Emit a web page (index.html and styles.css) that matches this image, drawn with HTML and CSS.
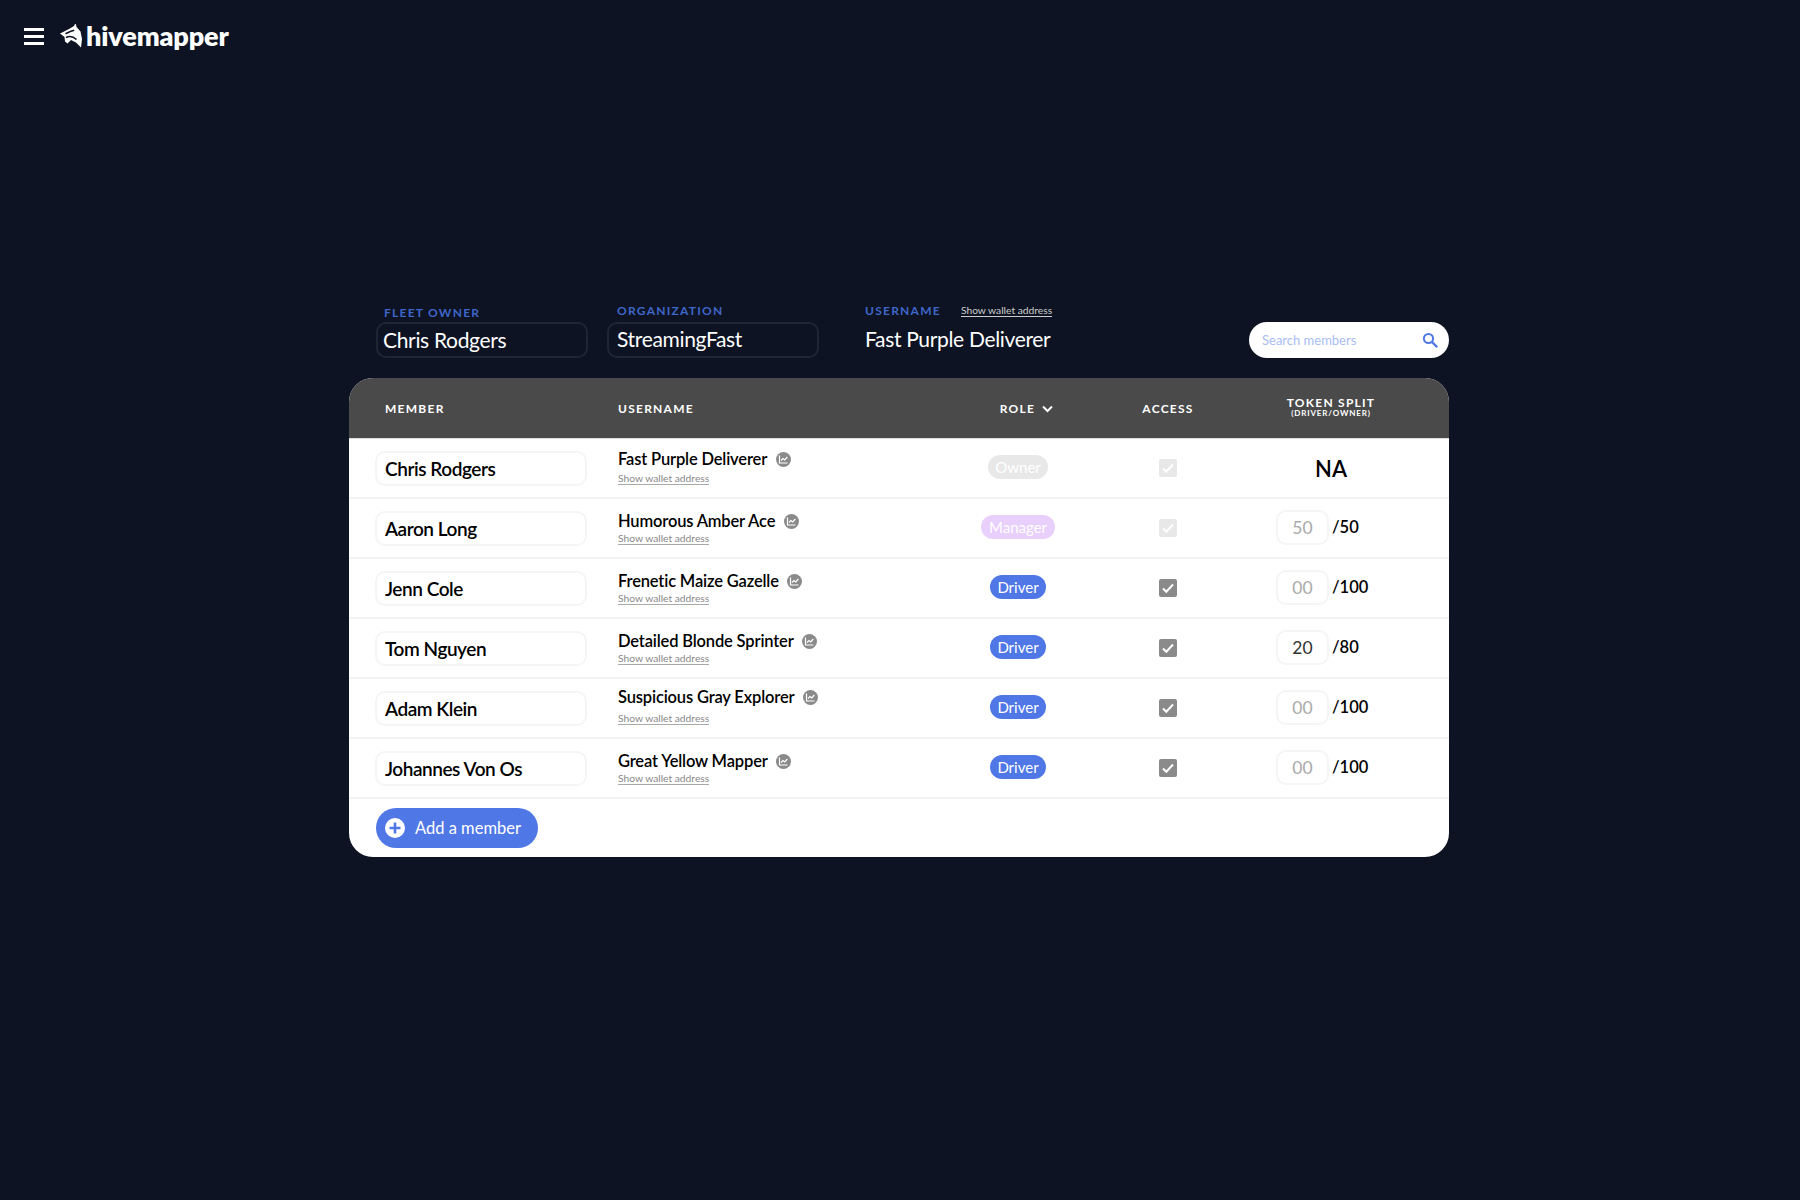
FILE: index.html
```html
<!DOCTYPE html>
<html lang="en">
<head>
    <meta charset="UTF-8">
    <meta name="viewport" content="width=device-width, initial-scale=1.0">
    <title>Hivemapper - Fleet members</title>
    <link rel="stylesheet" href="styles.css">
</head>
<body>
    <header class="topbar">
        <div class="burger"><span></span><span></span><span></span></div>
        <svg class="logo-mark" viewBox="0 0 22 24" width="22" height="24">
            <path fill="#fff" d="M0 9.5 9 5 14 2 15 0 16 .3 16.5 3 20.5 7.5 22 15 21 23.5 16 18.5 11 16 7.5 19.5 5 17.5 4.5 13Z"/>
            <path fill="none" stroke="#0d1322" stroke-width="1.6" d="M5.5 9.8C8 8.5 11 7 14.2 6.2M6 13.5C9 12 13 12.3 16.5 15.5"/>
        </svg>
        <span class="wordmark">hivemapper</span>
    </header>

    <main class="fleet">
        <div class="fleet-info">
            <div class="field field-owner">
                <label class="field-label">FLEET OWNER</label>
                <div class="field-box">Chris Rodgers</div>
            </div>
            <div class="field field-org">
                <label class="field-label">ORGANIZATION</label>
                <div class="field-box">StreamingFast</div>
            </div>
            <div class="field field-user">
                <div class="field-head">
                    <label class="field-label">USERNAME</label>
                    <a class="wallet-link light">Show wallet address</a>
                </div>
                <div class="field-value">Fast Purple Deliverer</div>
            </div>
            <div class="search">
                <span>Search members</span>
                <svg viewBox="0 0 16 16" width="16" height="16">
                    <circle cx="6.5" cy="6.5" r="4.6" fill="none" stroke="#4f77e6" stroke-width="2"/>
                    <path d="M10 10l4.5 4.5" stroke="#4f77e6" stroke-width="2.4" stroke-linecap="round"/>
                </svg>
            </div>
        </div>

        <div class="members">
            <div class="row head">
                <div>MEMBER</div>
                <div>USERNAME</div>
                <div class="center role-head">ROLE
                    <svg viewBox="0 0 11 8" width="11" height="8"><path d="M1 1.5l4.5 4.5 4.5-4.5" fill="none" stroke="#fff" stroke-width="2"/></svg>
                </div>
                <div class="center">ACCESS</div>
                <div class="center split">TOKEN SPLIT<small>(DRIVER/OWNER)</small></div>
            </div>

            <div class="row">
                <div><div class="name-box">Chris Rodgers</div></div>
                <div class="user">
                    <div class="user-name wide">Fast Purple Deliverer
                        <svg class="stats" viewBox="0 0 15 15" width="15" height="15"><circle cx="7.5" cy="7.5" r="7.5"/><path d="M3.5 3.5v7.5h8M5 8.5l2-2 1.8 1.5 2.5-3"/></svg>
                    </div>
                    <a class="wallet-link">Show wallet address</a>
                </div>
                <div class="center"><span class="pill owner">Owner</span></div>
                <div class="center"><span class="check off"><svg viewBox="0 0 18 18" width="18" height="18"><path d="M4 9.5l3.3 3.3L14 5.5"/></svg></span></div>
                <div class="center na">NA</div>
            </div>

            <div class="row">
                <div><div class="name-box">Aaron Long</div></div>
                <div class="user">
                    <div class="user-name">Humorous Amber Ace
                        <svg class="stats" viewBox="0 0 15 15" width="15" height="15"><circle cx="7.5" cy="7.5" r="7.5"/><path d="M3.5 3.5v7.5h8M5 8.5l2-2 1.8 1.5 2.5-3"/></svg>
                    </div>
                    <a class="wallet-link">Show wallet address</a>
                </div>
                <div class="center"><span class="pill manager">Manager</span></div>
                <div class="center"><span class="check off"><svg viewBox="0 0 18 18" width="18" height="18"><path d="M4 9.5l3.3 3.3L14 5.5"/></svg></span></div>
                <div class="token"><span class="token-box muted">50</span>/50</div>
            </div>

            <div class="row">
                <div><div class="name-box">Jenn Cole</div></div>
                <div class="user">
                    <div class="user-name">Frenetic Maize Gazelle
                        <svg class="stats" viewBox="0 0 15 15" width="15" height="15"><circle cx="7.5" cy="7.5" r="7.5"/><path d="M3.5 3.5v7.5h8M5 8.5l2-2 1.8 1.5 2.5-3"/></svg>
                    </div>
                    <a class="wallet-link">Show wallet address</a>
                </div>
                <div class="center"><span class="pill driver">Driver</span></div>
                <div class="center"><span class="check"><svg viewBox="0 0 18 18" width="18" height="18"><path d="M4 9.5l3.3 3.3L14 5.5"/></svg></span></div>
                <div class="token"><span class="token-box muted">00</span>/100</div>
            </div>

            <div class="row">
                <div><div class="name-box">Tom Nguyen</div></div>
                <div class="user">
                    <div class="user-name">Detailed Blonde Sprinter
                        <svg class="stats" viewBox="0 0 15 15" width="15" height="15"><circle cx="7.5" cy="7.5" r="7.5"/><path d="M3.5 3.5v7.5h8M5 8.5l2-2 1.8 1.5 2.5-3"/></svg>
                    </div>
                    <a class="wallet-link">Show wallet address</a>
                </div>
                <div class="center"><span class="pill driver">Driver</span></div>
                <div class="center"><span class="check"><svg viewBox="0 0 18 18" width="18" height="18"><path d="M4 9.5l3.3 3.3L14 5.5"/></svg></span></div>
                <div class="token"><span class="token-box">20</span>/80</div>
            </div>

            <div class="row">
                <div><div class="name-box">Adam Klein</div></div>
                <div class="user">
                    <div class="user-name wider">Suspicious Gray Explorer
                        <svg class="stats" viewBox="0 0 15 15" width="15" height="15"><circle cx="7.5" cy="7.5" r="7.5"/><path d="M3.5 3.5v7.5h8M5 8.5l2-2 1.8 1.5 2.5-3"/></svg>
                    </div>
                    <a class="wallet-link">Show wallet address</a>
                </div>
                <div class="center"><span class="pill driver">Driver</span></div>
                <div class="center"><span class="check"><svg viewBox="0 0 18 18" width="18" height="18"><path d="M4 9.5l3.3 3.3L14 5.5"/></svg></span></div>
                <div class="token"><span class="token-box muted">00</span>/100</div>
            </div>

            <div class="row">
                <div><div class="name-box">Johannes Von Os</div></div>
                <div class="user">
                    <div class="user-name">Great Yellow Mapper
                        <svg class="stats" viewBox="0 0 15 15" width="15" height="15"><circle cx="7.5" cy="7.5" r="7.5"/><path d="M3.5 3.5v7.5h8M5 8.5l2-2 1.8 1.5 2.5-3"/></svg>
                    </div>
                    <a class="wallet-link">Show wallet address</a>
                </div>
                <div class="center"><span class="pill driver">Driver</span></div>
                <div class="center"><span class="check"><svg viewBox="0 0 18 18" width="18" height="18"><path d="M4 9.5l3.3 3.3L14 5.5"/></svg></span></div>
                <div class="token"><span class="token-box muted">00</span>/100</div>
            </div>

            <div class="members-foot">
                <button class="add-button">
                    <svg viewBox="0 0 20 20" width="20" height="20"><circle cx="10" cy="10" r="10" fill="#fff"/><path d="M10 4.5v11M4.5 10h11" stroke="#4f77e6" stroke-width="2.6"/></svg>
                    Add a member
                </button>
            </div>
        </div>
    </main>
</body>
</html>
```

FILE: styles.css
```css
body {
    margin: 0;
    min-height: 100vh;
    background-color: #0d1322; /* Dark navy page */
    color: #fff;
    font-family: "Lato", sans-serif;
}

.topbar {
    display: flex;
    align-items: center;
    height: 72px;
    padding-left: 24px;
    box-sizing: border-box;
}

.burger {
    display: flex;
    flex-direction: column;
    gap: 4px;
    width: 20px;
    margin-right: 16px;
}

.burger span {
    height: 3px;
    background-color: #fff;
}

.logo-mark {
    margin-right: 4px;
}

.wordmark {
    font-size: 27px;
    font-weight: 800;
    letter-spacing: -0.15px;
    line-height: 1;
    margin-top: -1px;
}

.fleet {
    width: 1100px;
    margin: 231px 0 0 349px;
}

/* Fleet info above the table */
.fleet-info {
    display: flex;
    align-items: flex-end;
    height: 55px;
    margin-bottom: 20px;
}

.field-label {
    display: block;
    font-size: 12px;
    font-weight: 700;
    letter-spacing: 1.25px;
    color: #3f66c9;
}

.field-box {
    box-sizing: border-box;
    width: 212px;
    height: 36px;
    margin-top: 4px;
    padding-left: 5px;
    border: 2px solid #1e2635;
    border-radius: 10px;
    font-size: 21px;
    letter-spacing: -0.33px;
    line-height: 31px;
}

.field-owner {
    margin-left: 27px;
}

.field-owner .field-label {
    padding-left: 8px;
    margin-bottom: -2px;
}

.field-org {
    margin-left: 19px;
}

.field-org .field-label {
    padding-left: 10px;
    margin-bottom: 2px;
}

.field-org .field-box {
    padding-left: 8px;
    line-height: 30px;
}

.field-user {
    margin-left: 46px;
    width: 384px;
}

.field-head {
    display: flex;
    align-items: center;
    gap: 20px;
}

.field-value {
    height: 36px;
    margin-top: 4px;
    font-size: 21px;
    letter-spacing: -0.33px;
    line-height: 33px;
}

.search {
    display: flex;
    align-items: center;
    justify-content: space-between;
    box-sizing: border-box;
    width: 200px;
    height: 36px;
    padding: 0 11px 0 13px;
    background-color: #fff;
    border-radius: 18px;
    color: #a9bdf5;
    font-size: 13px;
}

/* Members table */
.members {
    overflow: hidden;
    background-color: #fff;
    border-radius: 24px;
    color: #000;
}

.row {
    display: grid;
    grid-template-columns: 269px 325px 150px 150px 176px;
    align-items: center;
    height: 60px;
    padding-bottom: 2px;
    box-sizing: border-box;
    border-bottom: 2px solid #f3f3f3;
}

.head {
    height: 61px;
    padding-bottom: 0;
    background-color: #4a4a4a;
    border-bottom: 1px solid #ddd;
    color: #fff;
    font-size: 12px;
    font-weight: 700;
    letter-spacing: 1.25px;
}

.head > div:first-child {
    padding-left: 36px;
}

.center {
    text-align: center;
}

.role-head {
    padding-left: 17px;
}

.head svg {
    margin-left: 3px;
}

.split {
    line-height: 10px;
}

.split small {
    display: block;
    font-size: 8px;
    letter-spacing: 0.85px;
}

.name-box {
    box-sizing: border-box;
    width: 212px;
    height: 35px;
    margin: 2px 0 0 26px;
    padding-left: 8px;
    border: 2px solid #f5f5f5;
    border-radius: 10px;
    font-size: 19px;
    font-weight: 600;
    letter-spacing: -0.45px;
    line-height: 31px;
}

.user {
    align-self: start;
    padding-top: 12px;
}

.user-name {
    display: flex;
    align-items: center;
    gap: 8.5px;
    font-size: 16.5px;
    font-weight: 600;
    letter-spacing: -0.16px;
    line-height: 20px;
    margin-bottom: 1px;
}

.user-name.wide {
    margin-top: -2px;
    margin-bottom: 3px;
}

.user-name.wider {
    margin-top: -4px;
    margin-bottom: 5px;
}

.stats circle {
    fill: #8a8a8a;
}

.stats path {
    fill: none;
    stroke: #fff;
    stroke-width: 1.2;
}

.wallet-link {
    display: block;
    width: fit-content;
    border-bottom: 1px solid #aaa;
    color: #888;
    font-size: 10.25px;
    line-height: 12px;
}

.wallet-link.light {
    color: #ccc;
    border-bottom-color: #ccc;
}

.pill {
    display: inline-block;
    height: 24px;
    padding: 0 7.5px;
    border-radius: 12px;
    color: #fff;
    font-size: 15px;
    line-height: 24px;
}

.driver {
    background-color: #4f77e6;
}

.manager {
    background-color: #e9cffb;
}

.owner {
    background-color: #e8e8e8;
}

.check {
    display: inline-block;
    width: 18px;
    height: 18px;
    border-radius: 2px;
    background-color: #8a8a8a;
    vertical-align: middle;
}

.check.off {
    background-color: #e8e8e8;
}

.check svg {
    display: block;
    fill: none;
    stroke: #fff;
    stroke-width: 2;
}

.na {
    margin-top: 2px;
    font-size: 22px;
    font-weight: 600;
}

.token {
    display: flex;
    align-items: center;
    padding-left: 33px;
    font-size: 16.5px;
    font-weight: 600;
}

.token-box {
    box-sizing: border-box;
    width: 53px;
    height: 35px;
    margin-right: 3px;
    border: 2px solid #f5f5f5;
    border-radius: 10px;
    color: #333;
    font-size: 17.5px;
    font-weight: 400;
    line-height: 31px;
    text-align: center;
}

.token-box.muted {
    color: #aaa;
}

.members-foot {
    height: 58px;
    padding: 9px 0 0 27px;
    box-sizing: border-box;
}

.add-button {
    display: flex;
    align-items: center;
    gap: 10px;
    height: 40px;
    width: 162px;
    padding: 0 0 0 9px;
    background-color: #4f77e6;
    border: none;
    border-radius: 20px;
    color: #fff;
    font-family: inherit;
    font-size: 16.5px;
}
```
